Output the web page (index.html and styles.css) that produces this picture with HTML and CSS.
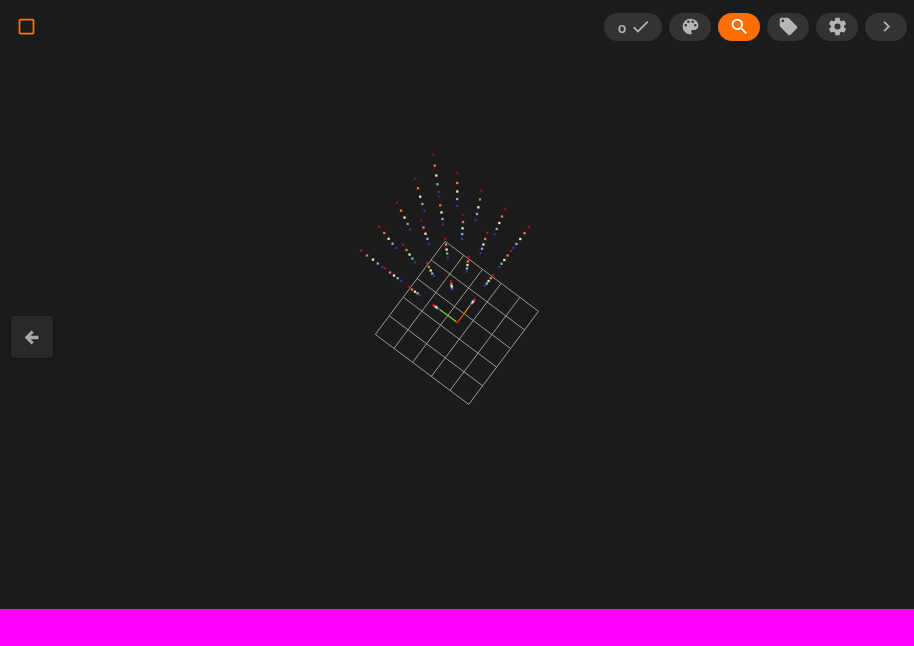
FILE: index.html
```
<!DOCTYPE html>
<html lang="en">
<head>
<meta charset="utf-8">
<title>3D viewer</title>
<link rel="stylesheet" href="styles.css">
</head>
<body>
<main class="viewer">
  <svg class="scene" viewBox="0 0 914 609" aria-hidden="true">
    <g id="grid" class="grid"></g>
    <path class="axis-y" d="M457.5 322.5L439 309"/>
    <path class="axis-x" d="M457.5 322.5L464.5 313"/>
    <path class="axis-x-far" d="M464.5 313L471.5 303.5"/>
    <g id="points"></g>
  </svg>
  <header class="toolbar">
    <svg class="icon select" viewBox="0 0 24 24"><path d="M19 3H5A2 2 0 0 0 3 5V19A2 2 0 0 0 5 21H19A2 2 0 0 0 21 19V5A2 2 0 0 0 19 3M19 5V19H5V5H19Z"/></svg>
    <nav class="actions">
      <button class="pill count"><span class="value">o</span><svg class="icon" viewBox="0 0 24 24"><path d="M21 7L9 19L3.5 13.5L4.91 12.09L9 16.17L19.59 5.59L21 7Z"/></svg></button>
      <button class="pill"><svg class="icon" viewBox="0 0 24 24"><path d="M17.5 12A1.5 1.5 0 0 1 16 10.5A1.5 1.5 0 0 1 17.5 9A1.5 1.5 0 0 1 19 10.5A1.5 1.5 0 0 1 17.5 12M14.5 8A1.5 1.5 0 0 1 13 6.5A1.5 1.5 0 0 1 14.5 5A1.5 1.5 0 0 1 16 6.5A1.5 1.5 0 0 1 14.5 8M9.5 8A1.5 1.5 0 0 1 8 6.5A1.5 1.5 0 0 1 9.5 5A1.5 1.5 0 0 1 11 6.5A1.5 1.5 0 0 1 9.5 8M6.5 12A1.5 1.5 0 0 1 5 10.5A1.5 1.5 0 0 1 6.5 9A1.5 1.5 0 0 1 8 10.5A1.5 1.5 0 0 1 6.5 12M12 3A9 9 0 0 0 3 12A9 9 0 0 0 12 21A1.5 1.5 0 0 0 13.5 19.5C13.5 19.11 13.35 18.76 13.11 18.5C12.88 18.23 12.73 17.88 12.73 17.5A1.5 1.5 0 0 1 14.23 16H16A5 5 0 0 0 21 11C21 6.58 16.97 3 12 3Z"/></svg></button>
      <button class="pill active"><svg class="icon" viewBox="0 0 24 24"><path d="M9.5 3A6.5 6.5 0 0 1 16 9.5C16 11.11 15.41 12.59 14.44 13.73L14.71 14H15.5L20.5 19L19 20.5L14 15.5V14.71L13.73 14.44C12.59 15.41 11.11 16 9.5 16A6.5 6.5 0 0 1 3 9.5A6.5 6.5 0 0 1 9.5 3M9.5 5C7 5 5 7 5 9.5C5 12 7 14 9.5 14C12 14 14 12 14 9.5C14 7 12 5 9.5 5Z"/></svg></button>
      <button class="pill"><svg class="icon" viewBox="0 0 24 24"><path d="M5.5 7A1.5 1.5 0 0 1 4 5.5A1.5 1.5 0 0 1 5.5 4A1.5 1.5 0 0 1 7 5.5A1.5 1.5 0 0 1 5.5 7M21.41 11.58L12.41 2.58C12.05 2.22 11.55 2 11 2H4C2.89 2 2 2.89 2 4V11C2 11.55 2.22 12.05 2.59 12.41L11.58 21.41C11.95 21.77 12.45 22 13 22C13.55 22 14.05 21.77 14.41 21.41L21.41 14.41C21.78 14.05 22 13.55 22 13C22 12.44 21.77 11.94 21.41 11.58Z"/></svg></button>
      <button class="pill"><svg class="icon" viewBox="0 0 24 24"><path d="M12 15.5A3.5 3.5 0 0 1 8.5 12A3.5 3.5 0 0 1 12 8.5A3.5 3.5 0 0 1 15.5 12A3.5 3.5 0 0 1 12 15.5M19.43 12.97C19.47 12.65 19.5 12.33 19.5 12C19.5 11.67 19.47 11.34 19.43 11L21.54 9.37C21.73 9.22 21.78 8.95 21.66 8.73L19.66 5.27C19.54 5.05 19.27 4.96 19.05 5.05L16.56 6.05C16.04 5.66 15.5 5.32 14.87 5.07L14.5 2.42C14.46 2.18 14.25 2 14 2H10C9.75 2 9.54 2.18 9.5 2.42L9.13 5.07C8.5 5.32 7.96 5.66 7.44 6.05L4.95 5.05C4.73 4.96 4.46 5.05 4.34 5.27L2.34 8.73C2.21 8.95 2.27 9.22 2.46 9.37L4.57 11C4.53 11.34 4.5 11.67 4.5 12C4.5 12.33 4.53 12.65 4.57 12.97L2.46 14.63C2.27 14.78 2.21 15.05 2.34 15.27L4.34 18.73C4.46 18.95 4.73 19.03 4.95 18.95L7.44 17.94C7.96 18.34 8.5 18.68 9.13 18.93L9.5 21.58C9.54 21.82 9.75 22 10 22H14C14.25 22 14.46 21.82 14.5 21.58L14.87 18.93C15.5 18.67 16.04 18.34 16.56 17.94L19.05 18.95C19.27 19.03 19.54 18.95 19.66 18.73L21.66 15.27C21.78 15.05 21.73 14.78 21.54 14.63L19.43 12.97Z"/></svg></button>
      <button class="pill"><svg class="icon" viewBox="0 0 24 24"><path d="M8.59 16.58L13.17 12L8.59 7.41L10 6L16 12L10 18L8.59 16.58Z"/></svg></button>
    </nav>
  </header>
  <button class="back"><svg class="icon" viewBox="0 0 24 24"><path d="M20 10V14H11L14.5 17.5L12.08 19.92L4.16 12L12.08 4.08L14.5 6.5L11 10H20Z"/></svg></button>
</main>
<footer class="strip"></footer>
<script src="scene.js"></script>
</body>
</html>
```
FILE: styles.css
```
* { box-sizing: border-box; }
body {
  margin: 0;
  height: 100vh;
  display: flex;
  flex-direction: column;
  overflow: hidden;
  background: #1b1b1b;
  color: #b5b5b5;
  font-family: "Open Sans", sans-serif;
}
button { border: 0; padding: 0; color: inherit; font: inherit; }
.viewer { position: relative; flex: 1; }
.scene { position: absolute; inset: 0; width: 914px; height: 609px; }
.grid { stroke: #999; stroke-width: 1; }
.axis-y { stroke: #74e600; stroke-width: 1.2; }
.axis-x { stroke: #ff5500; stroke-width: 1.2; }
.axis-x-far { stroke: #f0a000; stroke-width: 1.2; }
.toolbar {
  position: relative;
  display: flex;
  justify-content: space-between;
  align-items: center;
  padding: 13px 7px 0 16px;
}
.icon { display: block; width: 21px; height: 21px; fill: currentColor; }
.select { color: #f97412; margin-bottom: 1px; }
.actions { display: flex; gap: 7px; }
.pill {
  display: flex;
  align-items: center;
  justify-content: center;
  width: 42px;
  height: 28px;
  padding-bottom: 1px;
  border-radius: 14px;
  background: #333;
}
.count { width: 58px; gap: 4px; padding-left: 3px; }
.value { font-size: 14px; font-weight: 600; line-height: 28px; padding-top: 2px; }
.active { background: #ff6d05; color: #fff; }
.back {
  position: relative;
  display: flex;
  align-items: center;
  justify-content: center;
  width: 42px;
  height: 42px;
  margin: 275px 0 0 11px;
  padding-right: 1px;
  border-radius: 3px;
  background: #292929;
  color: #a8a8a8;
  box-shadow: 0 1px 3px rgba(0, 0, 0, .5);
}
.strip { height: 37px; background: #f0f; }
```
FILE: scene.js
```
const NS = "http://www.w3.org/2000/svg";
const add = (parent, tag, attrs) => {
  const node = document.createElementNS(NS, tag);
  for (const key in attrs) node.setAttribute(key, attrs[key]);
  document.getElementById(parent).appendChild(node);
};

// Floor grid, five cells on each side.
const top0 = [445.1, 241.3], right = [538.5, 311.3], left = [375.3, 334.4];
const u = [(right[0] - top0[0]) / 5, (right[1] - top0[1]) / 5];
const v = [(left[0] - top0[0]) / 5, (left[1] - top0[1]) / 5];
const at = (i, j) => [top0[0] + u[0] * i + v[0] * j, top0[1] + u[1] * i + v[1] * j];
for (let k = 0; k <= 5; k++) {
  for (const [a, b] of [[at(k, 0), at(k, 5)], [at(0, k), at(5, k)]]) {
    add("grid", "line", { x1: a[0], y1: a[1], x2: b[0], y2: b[1] });
  }
}

// Vertical point stacks, highest value first.
const colors = ["#86102a", "#ed7547", "#eee5c6", "#79b3d2", "#30388c"];
const stacks = [
  [433.3,154.5, 434.7,165.6, 436.3,175.5, 437.5,184.3, 438.5,192],
  [439,196.6, 440.2,205.3, 441.5,212.4, 442.5,219, 443,224.5],
  [415.3,178.6, 418,188.3, 420.2,196.7, 422.4,204, 424.5,210.7],
  [397,202.7, 401,210.6, 404.5,217.6, 407.7,224, 410.2,229.5],
  [379,226.7, 384.2,233, 388.6,238.8, 392.6,243.7, 396.3,247.8],
  [361,250.6, 367,255.5, 373,259.6, 377.8,263.5, 382.3,266.8],
  [384.8,268.5, 390,272.5, 394,275.5, 397.6,278.2, 401,281],
  [403,244.7, 406.5,250, 409.6,254.5, 412.4,258.6, 415,262.3],
  [421,220.6, 423.5,227.5, 425.5,233.7, 427.5,238.8, 429,243.7],
  [445.2,238.8, 446,244.5, 446.6,249.5, 447.2,253.5, 447.8,257.6],
  [427,262.8, 429,267, 430.7,270.5, 432.2,273.5, 434,276],
  [409.3,287, 412,289.5, 415,291.7, 417.5,293.3, 419.5,295],
  [457.2,172.8, 457.2,183, 457.3,191.5, 457.2,199, 457.2,206],
  [481.2,190.8, 480,199.4, 478.3,207.3, 477,214, 475.6,220.2],
  [505.2,208.7, 502,216.5, 499.3,223, 496.8,229, 494.5,234.4],
  [463.2,214.7, 463,222, 462.5,228.3, 462.2,234, 462,238.8],
  [487.2,233, 485.2,239, 483.4,244.5, 482,248.7, 480.6,253],
  [529,227, 524.5,233.2, 520.3,239, 516.5,244, 513.4,248],
  [511,251, 507.6,255.5, 504.3,260, 501.6,263.8, 499.2,267],
  [468.8,257, 468,261.5, 467.5,265, 467,268.5, 466.5,271.5],
  [493,275.5, 490.8,278.2, 488.6,281, 486.8,283.5, 485,285.5],
  [451,281, 451.3,283.8, 451.6,286, 452,287.5, 452.2,289.5],
  [474.8,299.3, 474,300.5, 473,301.7, 472,303, 471,304.3],
  [433,305, 434.5,306, 436,307, 437.2,308, 438.5,309],
  [457,322.5]
];
for (const s of stacks) {
  for (let i = s.length / 2 - 1; i >= 0; i--) {
    const near = s[1] > 225;
    const fill = i === 0 && near ? "#b00b28" : colors[i];
    add("points", "rect", { x: s[i * 2] - 1.15, y: s[i * 2 + 1] - 1.15, width: 2.3, height: 2.3, fill });
  }
}
```
